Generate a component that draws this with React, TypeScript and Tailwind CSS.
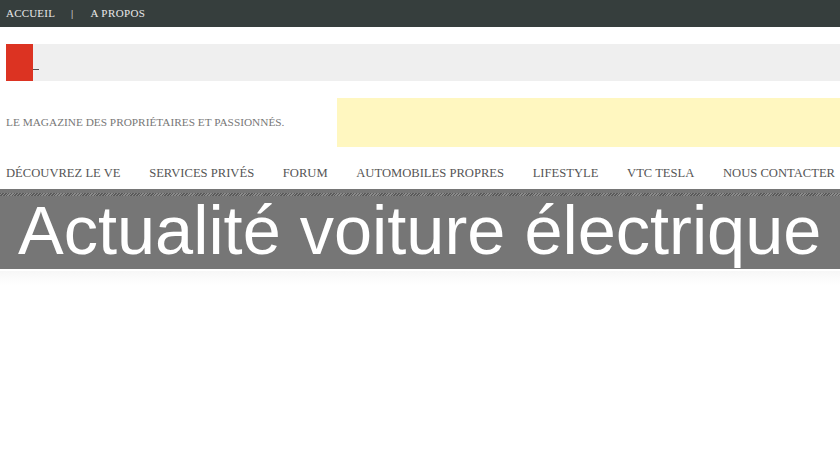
import React from "react";

const serif = { fontFamily: '"Liberation Serif", "DejaVu Serif", serif' };

export default function App() {
  const nav = [
    "DÉCOUVREZ LE VE",
    "SERVICES PRIVÉS",
    "FORUM",
    "AUTOMOBILES PROPRES",
    "LIFESTYLE",
    "VTC TESLA",
    "NOUS CONTACTER",
  ];
  return (
    <div className="w-[840px] h-[460px] bg-white overflow-hidden">
      <div
        className="h-[27px] bg-[#363e3d] flex items-center pl-[6px] text-[11px] text-[#e8e8e8] tracking-[0.2px]"
        style={serif}
      >
        <span>ACCUEIL</span>
        <span className="ml-[16px] mr-[17px]">|</span>
        <span className="tracking-[0.4px]">A PROPOS</span>
      </div>
      <div className="mt-[17px] ml-[6px] h-[37px] bg-[#efefef] flex items-end">
        <div className="w-[27px] h-[37px] bg-[#dc3322]" />
        <div className="w-[6px] h-[1px] bg-[#555] mb-[11px]" />
      </div>
      <div className="mt-[17px] h-[49px] flex">
        <div
          className="w-[337px] pl-[6px] flex items-center text-[11.3px] text-[#777]"
          style={serif}
        >
          LE MAGAZINE DES PROPRIÉTAIRES ET PASSIONNÉS.
        </div>
        <div className="flex-1 bg-[#fff7c0]" />
      </div>
      <div
        className="h-[42px] flex items-start justify-between pt-[19px] leading-[14px] pl-[6px] pr-[5px] text-[12.6px] text-[#555] whitespace-nowrap"
        style={serif}
      >
        {nav.map((n) => (
          <span key={n}>{n}</span>
        ))}
      </div>
      <div className="h-[80px] bg-[#767676] pt-[4px]">
        <div className="h-[3px] bg-[repeating-linear-gradient(135deg,#5a5a5a_0px,#5a5a5a_1px,#8a8a8a_1px,#8a8a8a_2px)]" />
        <div
          className="text-white text-[68.5px] leading-[69px] pl-[18px] whitespace-nowrap"
          style={{ fontFamily: '"Liberation Sans", Arial, sans-serif' }}
        >
          Actualité voiture électrique
        </div>
      </div>
      <div className="h-[14px] mt-[2px] bg-gradient-to-b from-[#f7f7f7] to-white" />
    </div>
  );
}
